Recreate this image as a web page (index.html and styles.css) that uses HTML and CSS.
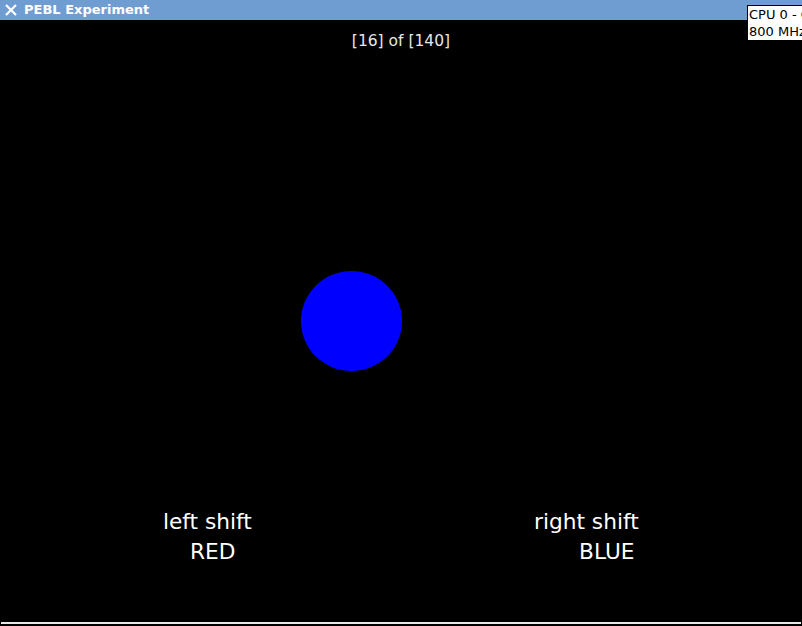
FILE: index.html
```html
<!DOCTYPE html>
<html>
<head>
<meta charset="utf-8">
<link rel="stylesheet" href="styles.css">
</head>
<body>
<div class="window">
  <div class="titlebar">
    <svg class="close" width="14" height="14" viewBox="0 0 14 14"><path d="M2 2 L12 12 M12 2 L2 12" stroke="#fff" stroke-width="2.2" fill="none"/></svg>
    <span class="title">PEBL Experiment</span>
  </div>
  <div class="stage">
    <div class="counter">[16] of [140]</div>
    <div class="dot"></div>
    <div class="labels">
      <div class="group left">
        <div class="l1">left shift</div>
        <div class="l2">RED</div>
      </div>
      <div class="group right">
        <div class="l1">right shift</div>
        <div class="l2">BLUE</div>
      </div>
    </div>
  </div>
  <div class="bottomline"></div>
  <div class="tooltip">CPU 0 - CPU<br>800 MHz</div>
</div>
</body>
</html>
```

FILE: styles.css
```css
html, body {
  margin: 0;
  padding: 0;
  background: #000;
}
.window {
  position: relative;
  width: 802px;
  height: 626px;
  overflow: hidden;
  background: #000;
  font-family: "DejaVu Sans", sans-serif;
}
.titlebar {
  height: 20px;
  background: #6f9dd2;
  display: flex;
  align-items: center;
  box-sizing: border-box;
}
.close {
  margin-left: 4px;
  margin-top: 0px;
}
.title {
  margin-left: 6px;
  color: #fff;
  font-weight: bold;
  font-size: 13px;
  line-height: 20px;
}
.stage {
  height: 602px;
  display: flex;
  flex-direction: column;
}
.counter {
  margin-top: 12px;
  text-align: center;
  color: #e6e6e6;
  font-size: 15.5px;
  line-height: 18px;
}
.dot {
  margin-top: 221px;
  margin-left: 301px;
  width: 101px;
  height: 100px;
  border-radius: 50%;
  background: #0000ff;
}
.labels {
  margin-top: 136px;
  display: flex;
  color: #fff;
  font-size: 21.7px;
  line-height: 30px;
}
.group.left { margin-left: 163px; width: 371px; }
.left .l2 { margin-left: 27px; }
.right .l2 { margin-left: 45px; }
.bottomline {
  margin-left: 1px;
  width: 800px;
  height: 2px;
  background: #e6e6e6;
}
.tooltip {
  position: absolute;
  left: 747px;
  top: 5px;
  width: 70px;
  height: 34px;
  background: #fff;
  border: 1px solid #000;
  color: #000;
  font-size: 13px;
  line-height: 17px;
  white-space: nowrap;
  padding-left: 1px;
}
```
